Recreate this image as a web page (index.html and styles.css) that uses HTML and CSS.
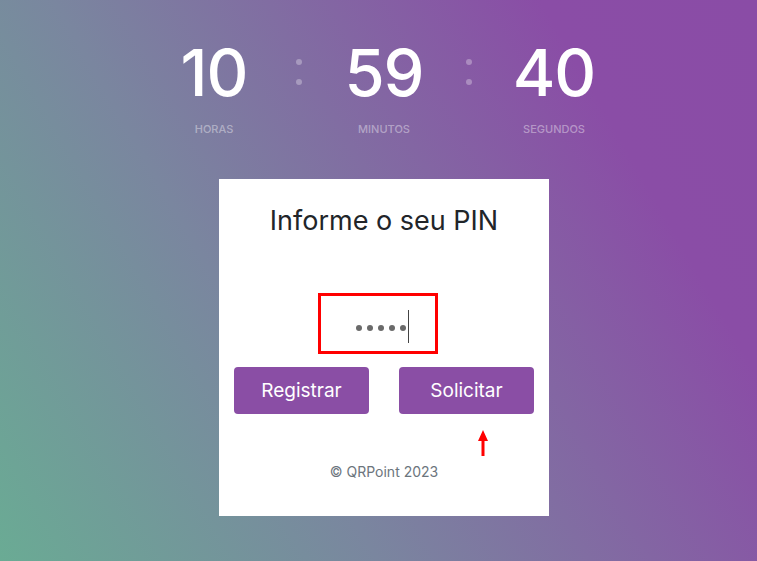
FILE: index.html
```html
<!DOCTYPE html>
<html lang="pt-BR">
<head>
<meta charset="utf-8">
<title>QRPoint</title>
<link rel="stylesheet" href="styles.css">
</head>
<body>
<main class="page">
  <section class="countdown">
    <div class="unit"><span class="num">10</span><span class="label">HORAS</span></div>
    <div class="sep"><i></i><i></i></div>
    <div class="unit"><span class="num">59</span><span class="label">MINUTOS</span></div>
    <div class="sep"><i></i><i></i></div>
    <div class="unit"><span class="num">40</span><span class="label">SEGUNDOS</span></div>
  </section>

  <section class="card">
    <h1 class="title">Informe o seu PIN</h1>
    <div class="pin">
      <span class="dot"></span><span class="dot"></span><span class="dot"></span><span class="dot"></span><span class="dot"></span><span class="caret"></span>
    </div>
    <div class="actions">
      <button class="btn">Registrar</button>
      <button class="btn">Solicitar</button>
    </div>
    <svg class="arrow" width="10" height="26" viewBox="0 0 10 26"><path d="M5 0 L10 11 L6.5 11 L6.5 26 L3.5 26 L3.5 11 L0 11 Z" fill="#ff0000"/></svg>
    <p class="footer">© QRPoint 2023</p>
  </section>
</main>
</body>
</html>
```
FILE: styles.css
```css
* { box-sizing: border-box; }
html, body { margin: 0; height: 100%; }
body {
  font-family: Inter, "Noto Sans", sans-serif;
  background: linear-gradient(60deg, #6aab94 0%, #7a869f 35%, #8a4da6 80%, #8a4ca6 100%);
  overflow: hidden;
}
.page {
  height: 561px;
  display: flex;
  flex-direction: column;
  align-items: center;
  padding-left: 11px;
  padding-top: 34px;
}
.countdown {
  display: flex;
  align-items: flex-start;
}
.unit {
  width: 140px;
  display: flex;
  flex-direction: column;
  align-items: center;
}
.num {
  font-size: 65px;
  font-weight: 500;
  color: #fff;
  line-height: 78px;
  letter-spacing: -1px;
}
.label {
  margin-top: 10px;
  font-size: 11px;
  font-weight: 500;
  color: rgba(255,255,255,0.4);
  line-height: 14px;
}
.sep {
  width: 30px;
  display: flex;
  flex-direction: column;
  align-items: center;
  gap: 14px;
  padding-top: 25px;
}
.sep i {
  width: 6px; height: 6px; border-radius: 50%;
  background: rgba(255,255,255,0.3);
}
.card {
  position: relative;
  margin-top: 43px;
  width: 330px;
  height: 337px;
  background: #fff;
  display: flex;
  flex-direction: column;
  align-items: center;
  padding: 25px 15px 0;
}
.title {
  margin: 0;
  font-size: 27px;
  font-weight: 400;
  color: #212529;
  line-height: 33px;
}
.pin {
  margin-top: 56px;
  width: 120px;
  height: 61px;
  border: 3px solid #ff0000;
  display: flex;
  align-items: center;
  justify-content: flex-end;
  gap: 5px;
  padding-right: 26px;
  margin-left: -13px;
}
.dot {
  width: 6px; height: 6px; border-radius: 50%;
  background: #6a6a6a;
  margin-top: 9px;
}
.caret {
  width: 1px; height: 33px;
  background: #444;
  margin-left: -3px;
  margin-top: 5px;
}
.actions {
  margin-top: 13px;
  width: 100%;
  display: flex;
  justify-content: space-between;
}
.btn {
  width: 135px;
  height: 47px;
  border: none;
  border-radius: 4px;
  background: #8a4ea5;
  color: #fff;
  font-family: inherit;
  font-size: 19px;
  font-weight: 400;
}
.arrow {
  position: absolute;
  left: 259px;
  top: 251px;
}
.footer {
  margin: 48px 0 0;
  font-size: 14px;
  color: #6c757d;
  line-height: 20px;
}
```
